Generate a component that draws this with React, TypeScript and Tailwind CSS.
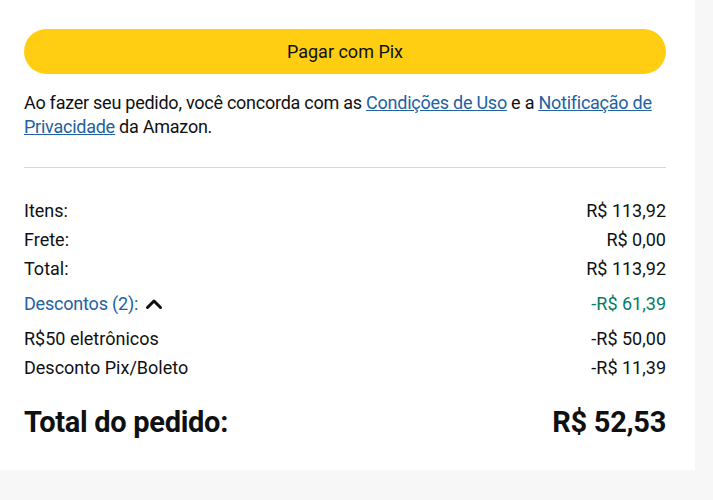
const rows = [
  { label: "Itens:", value: "R$ 113,92" },
  { label: "Frete:", value: "R$ 0,00" },
  { label: "Total:", value: "R$ 113,92" },
];

const discounts = [
  { label: "R$50 eletrônicos", value: "-R$ 50,00" },
  { label: "Desconto Pix/Boleto", value: "-R$ 11,39" },
];

export default function App() {
  return (
    <div className="h-[500px] w-[713px] bg-[#f7f7f7] font-['Roboto',Arial,sans-serif] text-[#0f1111]">
      <div className="h-[470px] w-[695px] bg-white pl-6 pr-[29px] pt-[29px]">
        {/* Pay button */}
        <button className="flex h-[45px] w-full items-center justify-center rounded-full bg-[#ffce12] text-[18px] text-[#0f1111]">
          Pagar com Pix
        </button>

        {/* Legal text */}
        <p className="mt-[17px] text-[18px] leading-6 tracking-[-0.25px]">
          Ao fazer seu pedido, você concorda com as{" "}
          <a className="text-[#2162a1] underline">Condições de Uso</a> e a{" "}
          <a className="text-[#2162a1] underline">Notificação de Privacidade</a> da Amazon.
        </p>

        <div className="mt-[28px] h-px bg-[#d5d9d9]" />

        {/* Summary */}
        <div className="mt-[28px] text-[18px]">
          {rows.map((r) => (
            <div key={r.label} className="flex h-[29px] items-center justify-between">
              <span>{r.label}</span>
              <span>{r.value}</span>
            </div>
          ))}
          <div className="mt-[6px] flex h-[29px] items-center justify-between">
            <span className="flex items-center gap-[7px] text-[#2162a1] tracking-[-0.2px]">
              Descontos (2):
              <svg width="18" height="12" viewBox="0 0 18 12" fill="none" stroke="#0f1111" strokeWidth="3" strokeLinecap="round" strokeLinejoin="round">
                <path d="M2.5 9.5L9 3l6.5 6.5" />
              </svg>
            </span>
            <span className="text-[#067d62]">-R$ 61,39</span>
          </div>
          <div className="mt-[6px]">
            {discounts.map((d) => (
              <div key={d.label} className="flex h-[29px] items-center justify-between">
                <span>{d.label}</span>
                <span>{d.value}</span>
              </div>
            ))}
          </div>
          <div className="mt-[19px] flex items-center justify-between text-[29px] font-bold tracking-[-0.3px]">
            <span>Total do pedido:</span>
            <span>R$ 52,53</span>
          </div>
        </div>
      </div>
    </div>
  );
}
